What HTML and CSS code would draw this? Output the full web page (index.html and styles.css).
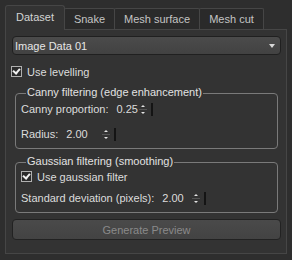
FILE: index.html
```html
<!DOCTYPE html>
<html lang="en">
<head>
    <meta charset="UTF-8">
    <title>Dataset</title>
    <link rel="stylesheet" href="styles.css">
</head>
<body>

<div class="panel">
    <!-- tabs -->
    <div class="tabs">
        <div class="tab active">Dataset</div>
        <div class="tab snake">Snake</div>
        <div class="tab surface">Mesh surface</div>
        <div class="tab cut">Mesh cut</div>
    </div>

    <div class="pane">
        <div class="combo">
            <span>Image Data 01</span>
            <span class="combo-arrow"></span>
        </div>

        <div class="check-row top-check">
            <span class="checkbox checked"></span>
            <span>Use levelling</span>
        </div>

        <!-- canny -->
        <div class="group canny">
            <span class="group-title">Canny filtering (edge enhancement)</span>
            <div class="field-row">
                <span class="field-label">Canny proportion:</span>
                <span class="value v-canny">0.25</span>
                <span class="spin"><i class="up"></i><b></b><i class="down"></i></span>
            </div>
            <div class="field-row">
                <span class="field-label">Radius:</span>
                <span class="value v-radius">2.00</span>
                <span class="spin"><i class="up"></i><b></b><i class="down"></i></span>
            </div>
        </div>

        <!-- gaussian -->
        <div class="group gauss">
            <span class="group-title">Gaussian filtering (smoothing)</span>
            <div class="check-row">
                <span class="checkbox checked"></span>
                <span>Use gaussian filter</span>
            </div>
            <div class="field-row">
                <span class="field-label">Standard deviation (pixels):</span>
                <span class="value v-sigma">2.00</span>
                <span class="spin"><i class="up"></i><b></b><i class="down"></i></span>
            </div>
        </div>

        <button class="preview-button" disabled>Generate Preview</button>
    </div>
</div>

</body>
</html>
```

FILE: styles.css
```css
/* base */
body {
    margin: 0;
    background: #2e2e2e;
    font-family: 'Liberation Sans', Arial, sans-serif;
    font-size: 11px;
    color: #dcdcdc;
}

.panel {
    width: 282px;
    padding: 5px 0 0 5px;
}

/* tabs */
.tabs {
    display: flex;
    align-items: flex-end;
    height: 24px;
}

.tab {
    box-sizing: border-box;
    height: 21px;
    line-height: 20px;
    text-align: center;
    white-space: nowrap;
    border: 1px solid #464646;
    border-bottom: none;
    border-radius: 2px 2px 0 0;
    background: #2a2a2a;
    color: #c4c4c4;
    margin-left: -1px;
}

.tab.active {
    width: 60px;
    height: 25px;
    line-height: 23px;
    margin-left: 0;
    margin-bottom: -1px;
    background: #333;
    border-radius: 3px 3px 0 0;
    position: relative;
    z-index: 1;
    color: #d4d4d4;
}

.tab.snake { width: 51px; }
.tab.surface { width: 86px; }
.tab.cut { width: 65px; }

.pane {
    box-sizing: border-box;
    height: 225px;
    border: 1px solid #464646;
    background: #333;
    padding: 6px 5px 0 6px;
}

/* combobox */
.combo {
    box-sizing: border-box;
    height: 19px;
    border: 1px solid #202020;
    border-radius: 4px;
    background: linear-gradient(#4b4b4b, #424242);
    display: flex;
    align-items: center;
    justify-content: space-between;
    padding: 0 5px 0 2px;
    color: #e6e6e6;
}

.combo-arrow {
    width: 0;
    height: 0;
    border-left: 3px solid transparent;
    border-right: 3px solid transparent;
    border-top: 4px solid #d8d8d8;
}

/* checkbox */
.check-row {
    display: flex;
    align-items: center;
    gap: 5px;
    height: 13px;
}

.top-check {
    margin: 10px 0 0 -1px;
}

.checkbox {
    box-sizing: border-box;
    width: 11px;
    height: 11px;
    border: 1px solid #b0b0b0;
    background: #2b2b2b;
    position: relative;
}

.checkbox.checked::after {
    content: "";
    position: absolute;
    left: 2px;
    top: 0;
    width: 3px;
    height: 5px;
    border: solid #f2f2f2;
    border-width: 0 2px 2px 0;
    transform: rotate(40deg);
}

/* group boxes */
.group {
    box-sizing: border-box;
    position: relative;
    margin: 0 3px;
    border: 1px solid #7a7a7a;
    border-radius: 4px;
    padding: 0 0 0 5px;
}

.group-title {
    position: absolute;
    top: -8px;
    left: 10px;
    padding: 0 1px;
    background: #333;
    color: #e2e2e2;
}

.canny {
    margin-top: 15px;
    height: 56px;
    padding-top: 8px;
}

.gauss {
    margin-top: 13px;
    height: 51px;
    padding-top: 8px;
}

.field-row {
    display: flex;
    align-items: center;
    height: 14px;
}

.canny .field-row + .field-row {
    margin-top: 11px;
}

.field-label {
    margin-right: 8px;
}

.v-canny { width: 23px; }
.v-radius { width: 36px; }
.v-sigma { width: 30px; }

.spin {
    box-sizing: border-box;
    display: flex;
    flex-direction: column;
    align-items: center;
    justify-content: space-between;
    width: 14px;
    height: 13px;
    padding: 2px 4px 2px 0;
    border-right: 2px solid #141414;
}

.spin i {
    display: block;
    width: 0;
    height: 0;
    border-left: 2px solid transparent;
    border-right: 2px solid transparent;
}

.spin b {
    display: block;
    width: 8px;
    height: 1px;
    background: #555;
}

.spin .up {
    border-bottom: 2px solid #e4e4e4;
}

.spin .down {
    border-top: 2px solid #e4e4e4;
}

.gauss .check-row {
    margin: -1px 0 0 0;
}

.gauss .field-row {
    margin-top: 8px;
}

/* button */
.preview-button {
    display: block;
    width: 100%;
    height: 21px;
    margin-top: 6px;
    border: 1px solid #222;
    border-radius: 4px;
    background: linear-gradient(#4a4a4a, #434343);
    color: #8a8a8a;
    font-family: inherit;
    font-size: 11px;
}
```
